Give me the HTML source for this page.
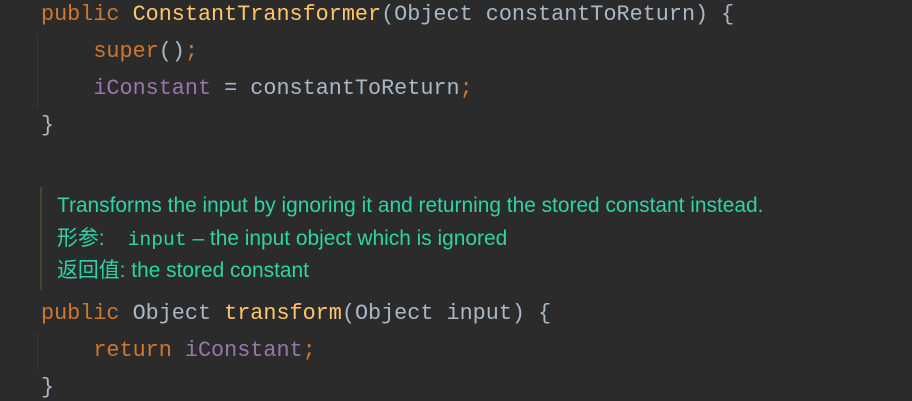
<!DOCTYPE html>
<html><head><meta charset="utf-8"><style>
body{margin:0;width:912px;height:400px;background:#2b2b2b;overflow:hidden;position:relative}
.l{position:absolute;left:41px;font-family:"Liberation Mono",monospace;font-size:21.8px;color:#a9b7c6;white-space:pre;line-height:26px}
.k{color:#cc7832}.m{color:#ffc66d}.f{color:#9876aa}
.d{position:absolute;left:57px;font-family:"Liberation Sans","Noto Sans CJK SC",sans-serif;font-size:20.9px;color:#2fd3a5;white-space:pre;line-height:24px}
.d code{font-family:"Liberation Mono",monospace;font-size:19.7px}
.g{position:absolute;left:37px;width:1px;background:#3a3a3a}
</style></head><body>
<div class="g" style="top:33px;height:75px"></div>
<div class="g" style="top:333px;height:36px"></div>
<div style="position:absolute;left:40px;top:187px;width:2px;height:103px;background:#3d4b35"></div>
<div class="l" style="top:2px"><span class="k">public </span><span class="m">ConstantTransformer</span>(Object constantToReturn) {</div>
<div class="l" style="top:39px">    <span class="k">super</span>()<span class="k">;</span></div>
<div class="l" style="top:76px">    <span class="f">iConstant</span> = constantToReturn<span class="k">;</span></div>
<div class="l" style="top:113px">}</div>
<div class="d" style="top:194px">Transforms the input by ignoring it and returning the stored constant instead.</div>
<div class="d" style="top:227px">形参:<span style="display:inline-block;width:23px"></span><code>input</code> – the input object which is ignored</div>
<div class="d" style="top:259px">返回值: the stored constant</div>
<div class="l" style="top:301px"><span class="k">public </span>Object <span class="m">transform</span>(Object input) {</div>
<div class="l" style="top:338px">    <span class="k">return </span><span class="f">iConstant</span><span class="k">;</span></div>
<div class="l" style="top:375px">}</div>
</body></html>
